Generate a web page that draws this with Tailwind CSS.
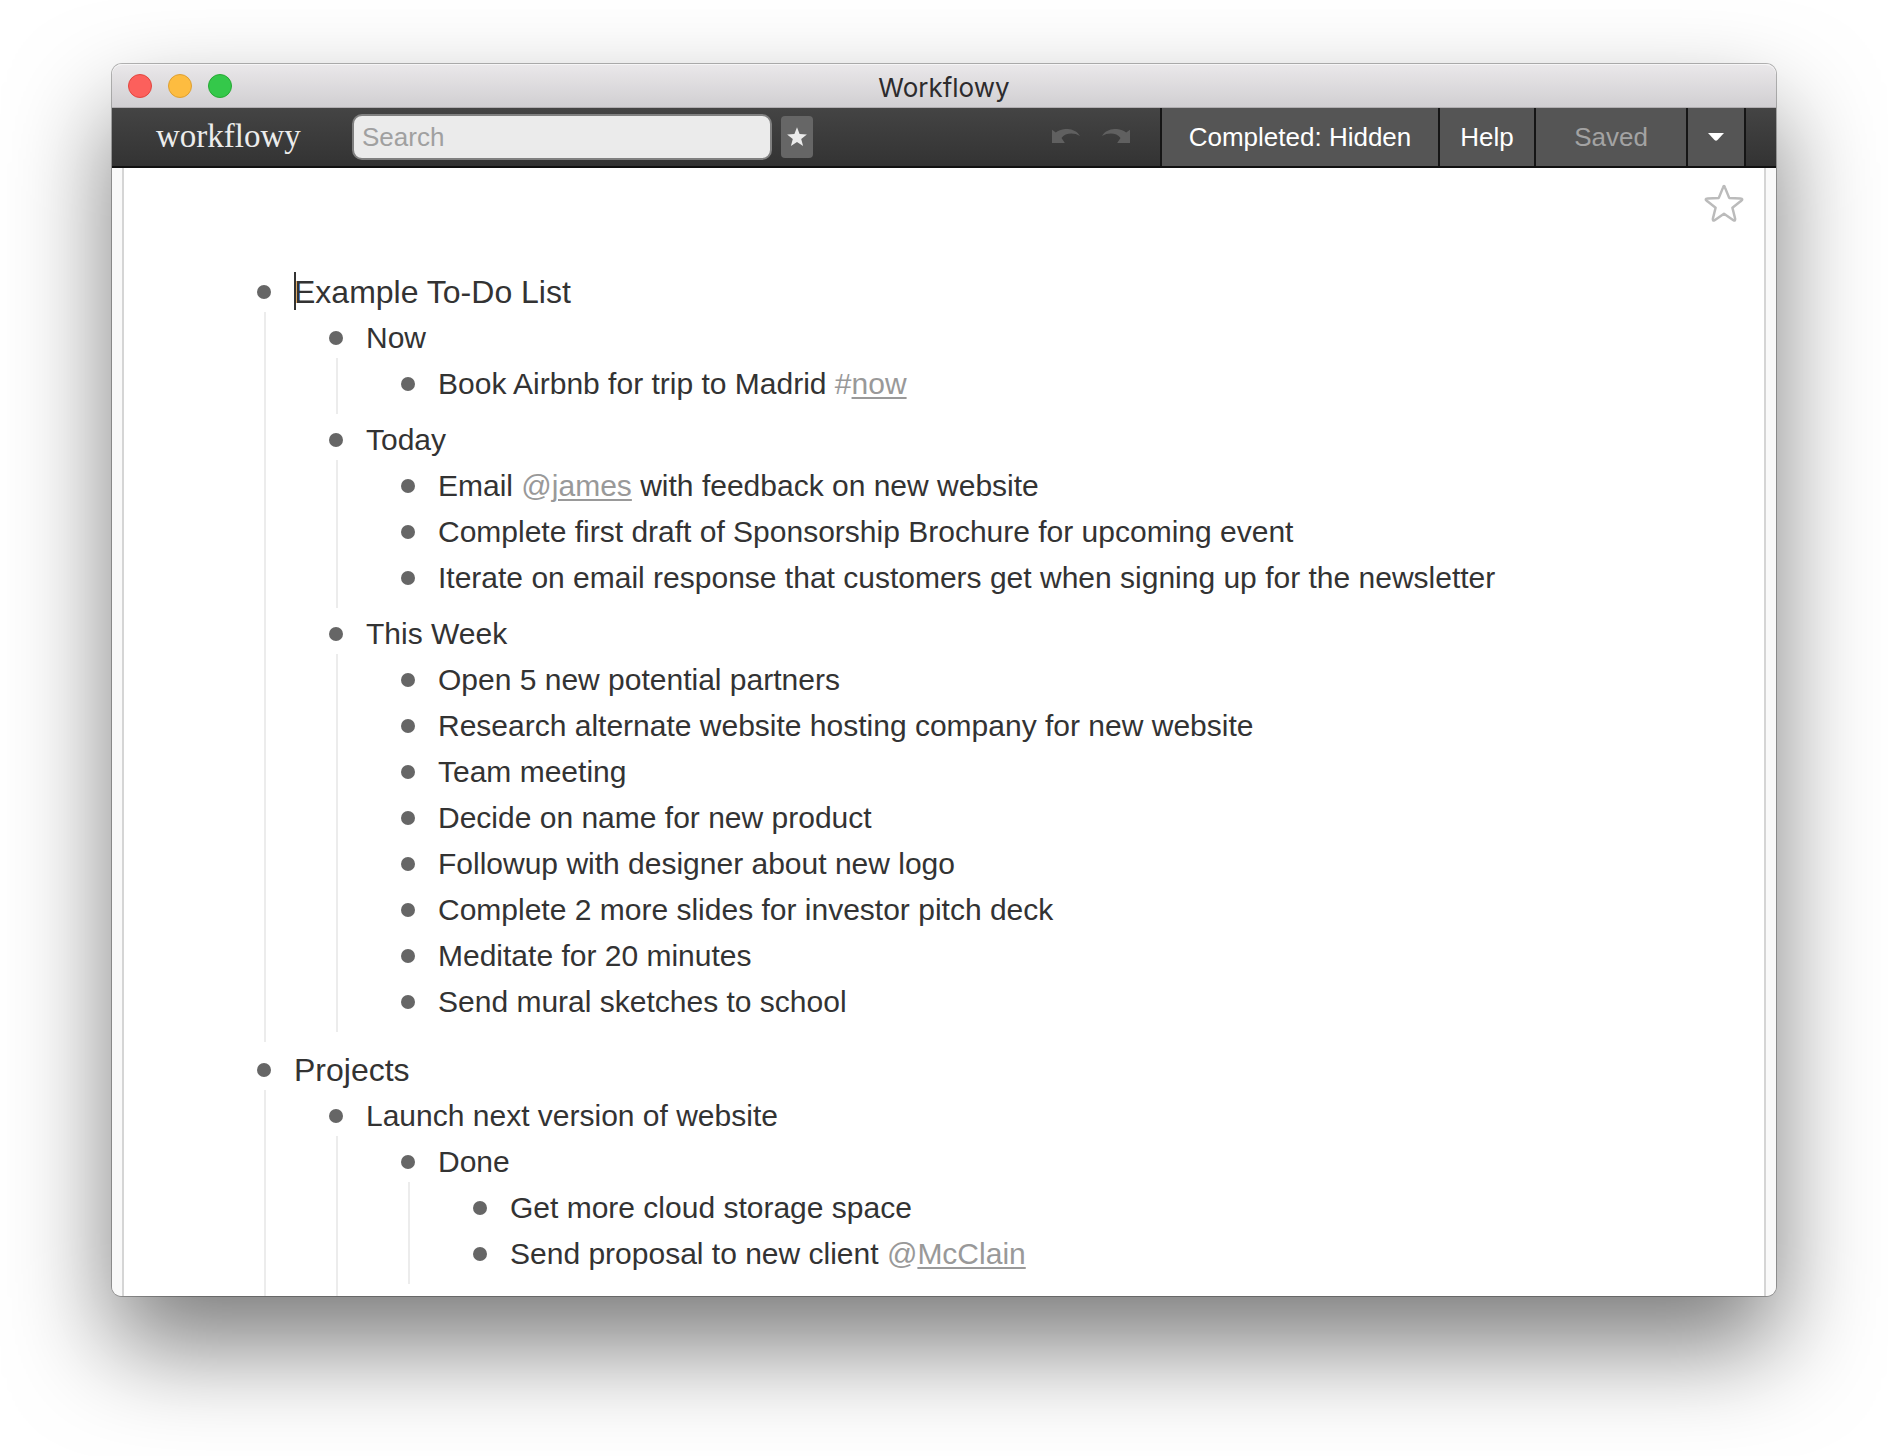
<!DOCTYPE html>
<html lang="en">
<head>
<meta charset="utf-8">
<title>Workflowy</title>
<script src="https://cdn.jsdelivr.net/npm/@tailwindcss/browser@4"></script>
</head>
<body class="bg-white font-['Liberation_Sans',Arial,sans-serif] text-[#333]">
<div class="flex h-screen flex-col overflow-hidden px-28 pt-16 pb-40">
  <div class="flex min-h-0 flex-1 flex-col rounded-[10px] shadow-[0_0_0_1px_rgba(0,0,0,0.28),0_50px_100px_rgba(0,0,0,0.52)]">
    <header class="grid h-11 shrink-0 grid-cols-[1fr_auto_1fr] items-center rounded-t-[10px] border-b border-[#b1aeb1] bg-linear-to-b from-[#eae8ea] to-[#d1cfd2] px-4 shadow-[inset_0_1px_0_#f6f5f6]">
      <div class="flex gap-4">
        <button aria-label="Close" class="size-6 rounded-full border border-[#e2463f] bg-[#fc605c]"></button>
        <button aria-label="Minimize" class="size-6 rounded-full border border-[#dea032] bg-[#fdbc40]"></button>
        <button aria-label="Zoom" class="size-6 rounded-full border border-[#27a934] bg-[#34c84a]"></button>
      </div>
      <h1 class="pt-1 font-[Inter,sans-serif] text-[26px] leading-8 text-[#2d2b2d]">Workflowy</h1>
    </header>

    <nav class="flex h-15 shrink-0 items-stretch border-b-2 border-[#111] bg-linear-to-b from-[#444] to-[#333] pr-[30px] pl-11 text-[26px]">
      <a href="#" class="w-[196px] pt-1 font-['Liberation_Serif',serif] text-[33px] leading-12 text-[#ececec]">workflowy</a>
      <input type="search" placeholder="Search" aria-label="Search" class="mt-1.5 h-[46px] w-[420px] rounded-[10px] border-2 border-[#808080] bg-[#ebebeb] px-2 outline-none placeholder:text-[#a0a0a0]">
      <button aria-label="Starred pages" class="mt-2 ml-[9px] flex h-[42px] w-8 items-center justify-center rounded-[4px] bg-[#666]">
        <svg class="size-5" viewBox="0 0 20 20" fill="#ebebeb"><path d="M10 .3 12.6 7.1 19.9 7.5 14.2 12 16.1 19 10 15.1 3.9 19 5.8 12 .1 7.5 7.4 7.1Z"/></svg>
      </button>
      <div class="ml-auto flex items-center gap-[22px] pr-[30px]">
        <button aria-label="Undo" class="pb-0.5"><svg class="h-3.5 w-7" viewBox="0 0 28 14" fill="#606060"><path d="M0 .8 3.8 3.6C9-1.500 23-2 28 7 22 3.200 13 3.800 9.500 9L12.800 14H0Z"/></svg></button>
        <button aria-label="Redo" class="pb-0.5"><svg class="h-3.5 w-7" viewBox="0 0 28 14" fill="#606060"><path d="M28 .8 24.200 3.600C19-1.500 5-2 0 7 6 3.200 15 3.800 18.500 9L15.200 14H28Z"/></svg></button>
      </div>
      <button class="w-[280px] border-x-2 border-[#151515] bg-[#555] text-white">Completed: Hidden</button>
      <button class="w-24 border-r-2 border-[#151515] bg-[#555] text-white">Help</button>
      <button class="w-[152px] border-r-2 border-[#151515] bg-[#555] text-[#a3a3a3]">Saved</button>
      <button aria-label="Menu" class="flex w-[58px] items-center justify-center border-r-2 border-[#151515] bg-[#555]">
        <svg class="h-2 w-4" viewBox="0 0 16 8" fill="#fff"><path d="M0 0H16L9.500 7Q8 8.500 6.500 7Z"/></svg>
      </button>
    </nav>

    <div class="min-h-0 flex-1 overflow-hidden rounded-b-[9px] bg-[#f9f9f9] px-2.5">
      <main class="border-x-2 border-[#d5d5d5] bg-white">
        <div class="flex h-[101px] items-start justify-end px-5 pt-4">
          <button aria-label="Star this page">
            <svg class="size-10" viewBox="0 0 40 40" fill="none" stroke="#bbb" stroke-width="2.500" stroke-linejoin="round"><path d="M19 3.600Q20 .500 21 3.600L25.200 13.900 36.200 14.600Q40 15 36.900 17.100L28.400 23.700 31.100 34.500Q31.500 37.500 29.400 36.200L20 29.800 10.600 36.200Q8.500 37.500 8.900 34.500L11.600 23.700 3.100 17.100Q0 15 3.800 14.600L14.800 13.900Z"/></svg>
          </button>
        </div>
        <ul class="pl-[133px] text-[30px] leading-[46px]">
          <li class="mb-[5px]">
            <div class="relative flex items-center gap-[23px] text-[32px]"><a href="#" aria-label="Open item" class="size-3.5 rounded-full bg-[#666]"></a><span>Example To-Do List</span><i class="absolute top-[3px] left-[37px] h-[38px] w-0.5 bg-[#333]"></i></div>
            <ul class="-mt-[3px] ml-[7px] border-l-2 border-[#ececec] pt-[3px] pb-[7px] pl-[63px]">
              <li class="mb-[3px]">
                <div class="flex items-center gap-[23px]"><a href="#" aria-label="Open item" class="size-3.5 rounded-full bg-[#666]"></a><span>Now</span></div>
                <ul class="-mt-[3px] ml-[7px] border-l-2 border-[#ececec] pt-[3px] pb-[7px] pl-[63px]">
                  <li class="flex items-center gap-[23px]"><a href="#" aria-label="Open item" class="size-3.5 rounded-full bg-[#666]"></a><span>Book Airbnb for trip to Madrid <a href="#" class="text-[#999]">#<u class="decoration-2 underline-offset-3">now</u></a></span></li>
                </ul>
              </li>
              <li class="mb-[3px]">
                <div class="flex items-center gap-[23px]"><a href="#" aria-label="Open item" class="size-3.5 rounded-full bg-[#666]"></a><span>Today</span></div>
                <ul class="-mt-[3px] ml-[7px] border-l-2 border-[#ececec] pt-[3px] pb-[7px] pl-[63px]">
                  <li class="flex items-center gap-[23px]"><a href="#" aria-label="Open item" class="size-3.5 rounded-full bg-[#666]"></a><span>Email <a href="#" class="text-[#999]">@<u class="decoration-2 underline-offset-3">james</u></a> with feedback on new website</span></li>
                  <li class="flex items-center gap-[23px]"><a href="#" aria-label="Open item" class="size-3.5 rounded-full bg-[#666]"></a><span>Complete first draft of Sponsorship Brochure for upcoming event</span></li>
                  <li class="flex items-center gap-[23px]"><a href="#" aria-label="Open item" class="size-3.5 rounded-full bg-[#666]"></a><span>Iterate on email response that customers get when signing up for the newsletter</span></li>
                </ul>
              </li>
              <li class="mb-[3px]">
                <div class="flex items-center gap-[23px]"><a href="#" aria-label="Open item" class="size-3.5 rounded-full bg-[#666]"></a><span>This Week</span></div>
                <ul class="-mt-[3px] ml-[7px] border-l-2 border-[#ececec] pt-[3px] pb-[7px] pl-[63px]">
                  <li class="flex items-center gap-[23px]"><a href="#" aria-label="Open item" class="size-3.5 rounded-full bg-[#666]"></a><span>Open 5 new potential partners</span></li>
                  <li class="flex items-center gap-[23px]"><a href="#" aria-label="Open item" class="size-3.5 rounded-full bg-[#666]"></a><span>Research alternate website hosting company for new website</span></li>
                  <li class="flex items-center gap-[23px]"><a href="#" aria-label="Open item" class="size-3.5 rounded-full bg-[#666]"></a><span>Team meeting</span></li>
                  <li class="flex items-center gap-[23px]"><a href="#" aria-label="Open item" class="size-3.5 rounded-full bg-[#666]"></a><span>Decide on name for new product</span></li>
                  <li class="flex items-center gap-[23px]"><a href="#" aria-label="Open item" class="size-3.5 rounded-full bg-[#666]"></a><span>Followup with designer about new logo</span></li>
                  <li class="flex items-center gap-[23px]"><a href="#" aria-label="Open item" class="size-3.5 rounded-full bg-[#666]"></a><span>Complete 2 more slides for investor pitch deck</span></li>
                  <li class="flex items-center gap-[23px]"><a href="#" aria-label="Open item" class="size-3.5 rounded-full bg-[#666]"></a><span>Meditate for 20 minutes</span></li>
                  <li class="flex items-center gap-[23px]"><a href="#" aria-label="Open item" class="size-3.5 rounded-full bg-[#666]"></a><span>Send mural sketches to school</span></li>
                </ul>
              </li>
            </ul>
          </li>
          <li>
            <div class="flex items-center gap-[23px] text-[32px]"><a href="#" aria-label="Open item" class="size-3.5 rounded-full bg-[#666]"></a><span>Projects</span></div>
            <ul class="-mt-[3px] ml-[7px] border-l-2 border-[#ececec] pt-[3px] pb-[7px] pl-[63px]">
              <li class="mb-[3px]">
                <div class="flex items-center gap-[23px]"><a href="#" aria-label="Open item" class="size-3.5 rounded-full bg-[#666]"></a><span>Launch next version of website</span></div>
                <ul class="-mt-[3px] ml-[7px] border-l-2 border-[#ececec] pt-[3px] pb-12 pl-[63px]">
                  <li class="mb-[3px]">
                    <div class="flex items-center gap-[23px]"><a href="#" aria-label="Open item" class="size-3.5 rounded-full bg-[#666]"></a><span>Done</span></div>
                    <ul class="-mt-[3px] ml-[7px] border-l-2 border-[#ececec] pt-[3px] pb-[7px] pl-[63px]">
                      <li class="flex items-center gap-[23px]"><a href="#" aria-label="Open item" class="size-3.5 rounded-full bg-[#666]"></a><span>Get more cloud storage space</span></li>
                      <li class="flex items-center gap-[23px]"><a href="#" aria-label="Open item" class="size-3.5 rounded-full bg-[#666]"></a><span>Send proposal to new client <a href="#" class="text-[#999]">@<u class="decoration-2 underline-offset-3">McClain</u></a></span></li>
                    </ul>
                  </li>
                </ul>
              </li>
            </ul>
          </li>
        </ul>
      </main>
    </div>
  </div>
</div>
</body>
</html>
